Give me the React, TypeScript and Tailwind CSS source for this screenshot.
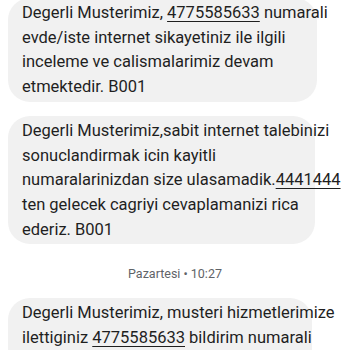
const Num = ({ children }: { children: React.ReactNode }) => (
  <span className="underline decoration-1 underline-offset-[3px]">{children}</span>
);

type BubbleProps = {
  className?: string;
  children: React.ReactNode;
};

function Bubble({ className, children }: BubbleProps) {
  return (
    <div
      className={`rounded-[22px] bg-[#f1f1f1] pl-[14px] pr-2 pt-[3px] text-[16.5px] leading-[24.7px] text-[#1f1f1f] whitespace-nowrap ${className}`}
    >
      {children}
    </div>
  );
}

export default function App() {
  return (
    <div
      className="h-[350px] w-[350px] overflow-hidden bg-white"
      style={{ fontFamily: "Roboto, 'Noto Sans', sans-serif" }}
    >
      <div className="flex flex-col items-start pl-2">
        <Bubble className="-mt-[2px] w-[309px] pb-[2px]">
          Degerli Musterimiz, <Num>4775585633</Num> numarali
          <br />
          evde/iste internet sikayetiniz ile ilgili
          <br />
          inceleme ve calismalarimiz devam
          <br />
          etmektedir. B001
        </Bubble>

        <Bubble className="mt-[14px] w-[307px] pb-[2px]">
          Degerli Musterimiz,sabit internet talebinizi
          <br />
          sonuclandirmak icin kayitli
          <br />
          numaralarinizdan size ulasamadik.<Num>4441444</Num>
          <br />
          ten gelecek cagriyi cevaplamanizi rica
          <br />
          ederiz. B001
        </Bubble>

        <div className="w-[334px] pt-[22px] pb-[16px] text-center text-[12.5px] leading-4 text-[#5f6368]">
          Pazartesi • 10:27
        </div>

        {/* last bubble runs off the bottom of the screen */}
        <Bubble className="w-[304px] pb-8">
          Degerli Musterimiz, musteri hizmetlerimize
          <br />
          ilettiginiz <Num>4775585633</Num> bildirim numarali
        </Bubble>
      </div>
    </div>
  );
}
